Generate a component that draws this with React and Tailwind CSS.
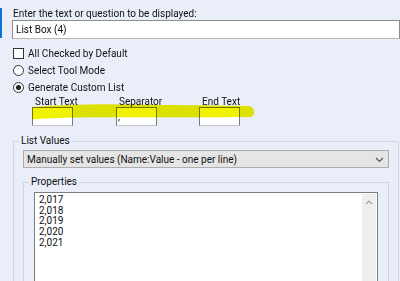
import React from "react";

const items = ["2,017", "2,018", "2,019", "2,020", "2,021"];

function Group({ label, className, labelClass, children }) {
  return (
    <div className={"relative border border-[#d2d6e0] " + className}>
      <span className={"absolute top-[-7px] leading-[12px] px-[2px] bg-[#eaeef8] " + labelClass}>
        {label}
      </span>
      {children}
    </div>
  );
}

export default function App() {
  return (
    <div className="relative w-[400px] h-[281px] overflow-hidden bg-[#eaeef8] text-[#111] text-[10px] font-['Roboto',sans-serif]">
      <div className="absolute left-0 top-[8px] w-[2px] h-[30px] bg-[#0a74d8]" />
      <div className="pl-[12px] pt-[7px]">
        <div className="pl-[1px] h-[13px] leading-[13px]">
          Enter the text or question to be displayed:
        </div>
        <div className="flex items-center h-[19px] w-[388px] pl-[3px] bg-white border border-[#8c8c8c] border-b-[#b8b8b8]">
          List Box (4)
        </div>

        <div className="mt-[6px] flex items-center h-[17px]">
          <span className="ml-[1px] w-[11px] h-[11px] border border-[#333] bg-white" />
          <span className="ml-[4px]">All Checked by Default</span>
        </div>
        <div className="flex items-center h-[17px]">
          <span className="ml-[1px] w-[11px] h-[11px] rounded-full border border-[#333] bg-white" />
          <span className="ml-[4px]">Select Tool Mode</span>
        </div>
        <div className="flex items-center h-[17px]">
          <span className="ml-[1px] w-[11px] h-[11px] rounded-full border border-[#333] bg-white flex items-center justify-center">
            <span className="w-[5px] h-[5px] rounded-full bg-[#222]" />
          </span>
          <span className="ml-[4px]">Generate Custom List</span>
        </div>

        <div className="relative flex ml-[20px]">
          {["Start Text", "Separator", "End Text"].map((t, i) => (
            <div key={t} className={i === 0 ? "w-[84px]" : "w-[83px]"}>
              <div className="pl-[3px] h-[11px] leading-[11px]">{t}</div>
              <div className="relative w-[41px] h-[19px] bg-white border border-[#7a7a7a] border-b-[#c4c4c4]">
                {i === 1 && (
                  <span className="absolute left-[1px] top-[4px] leading-[10px]">,</span>
                )}
              </div>
            </div>
          ))}
          <svg
            className="absolute left-0 top-[8px] mix-blend-multiply pointer-events-none"
            width="224"
            height="18"
            viewBox="0 0 224 18"
          >
            <path
              d="M0 3 C30 1, 60 0, 90 0.5 C140 1, 190 1.5, 216 2 C221 2.2, 222 6, 222 8 C222 11, 221 13, 216 13 C160 13.5, 80 13, 40 13.5 C20 14, 5 15, 0 15.5 Z"
              fill="#f1f200"
            />
          </svg>
        </div>

        <Group
          label="List Values"
          className="mt-[15px] ml-[1px] w-[386px] h-[150px] pt-[8px] pl-[9px]"
          labelClass="left-[5px]"
        >
          <div className="relative flex items-center w-[366px] h-[18px] pl-[3px] bg-[#e5e5e5] border border-[#adadad]">
            Manually set values (Name:Value - one per line)
            <svg className="absolute right-[4px] top-[6px]" width="9" height="6" viewBox="0 0 9 6">
              <path d="M1 1 L4.5 4.5 L8 1" fill="none" stroke="#555" strokeWidth="1.1" />
            </svg>
          </div>
          <Group
            label="Properties"
            className="mt-[14px] w-[366px] h-[120px] pt-[9px] pl-[10px]"
            labelClass="left-[5px]"
          >
            <div className="flex w-[344px] h-[110px] bg-white border border-[#7d7d7d]">
              <div className="flex-1 pl-[4px] pt-[2px] leading-[10.7px]">
                {items.map((v) => (
                  <div key={v}>{v}</div>
                ))}
              </div>
              <div className="w-[14px] mr-[1px] mt-[1px] bg-[#eeeeee] flex justify-center pt-[6px]">
                <svg width="8" height="5" viewBox="0 0 8 5">
                  <path d="M1 4 L4 1 L7 4" fill="none" stroke="#a0a0a0" strokeWidth="1.1" />
                </svg>
              </div>
            </div>
          </Group>
        </Group>
      </div>
    </div>
  );
}
